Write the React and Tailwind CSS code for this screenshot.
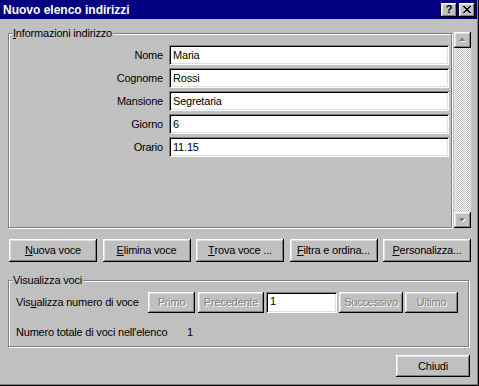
import React from 'react'

const raised =
  'shadow-[inset_-1px_-1px_0_#000,inset_1px_1px_0_#fff,inset_-2px_-2px_0_#808080,inset_2px_2px_0_#dfdfdf]'
const sunken =
  'shadow-[inset_1px_1px_0_#808080,inset_-1px_-1px_0_#fff,inset_2px_2px_0_#000,inset_-2px_-2px_0_#dfdfdf]'

const fields = [
  ['Nome', 'Maria'],
  ['Cognome', 'Rossi'],
  ['Mansione', 'Segretaria'],
  ['Giorno', '6'],
  ['Orario', '11.15'],
]

function Button({ className = '', disabled = false, children }) {
  return (
    <button
      type="button"
      className={`flex items-center justify-center bg-[#c0c0c0] ${raised} ${
        disabled ? 'text-[#808080] [text-shadow:1px_1px_0_#fff]' : 'text-black'
      } ${className}`}
    >
      {children}
    </button>
  )
}

function Arrow({ down = false }) {
  return (
    <svg width="9" height="6" viewBox="0 0 9 6" shapeRendering="crispEdges">
      {down ? (
        <>
          <polygon points="1,2 8,2 4.5,5.5" fill="#fff" />
          <polygon points="0,1 7,1 3.5,4.5" fill="#808080" />
        </>
      ) : (
        <>
          <polygon points="1,5 8,5 4.5,1.5" fill="#fff" />
          <polygon points="0,4 7,4 3.5,0.5" fill="#808080" />
        </>
      )}
    </svg>
  )
}

function Group({ label, className = '', children }) {
  return (
    <div
      className={`relative border border-[#808080] shadow-[inset_1px_1px_0_#fff,1px_1px_0_#fff] ${className}`}
    >
      <span className="absolute -top-[8px] left-[3px] bg-[#c0c0c0] px-[1px] leading-[14px]">
        {label}
      </span>
      {children}
    </div>
  )
}

export default function App() {
  return (
    <div className="flex h-[386px] w-[479px] flex-col bg-[#c0c0c0] font-['Liberation_Sans',Arial,sans-serif] text-[11px] tracking-[-0.2px] text-black shadow-[inset_-1px_-1px_0_#000,inset_-2px_-2px_0_#808080]">
      {/* title bar */}
      <div className="mr-[2px] flex h-[19px] shrink-0 items-center bg-[#000080] pl-[3px] pr-[2px]">
        <span className="text-[12px] font-bold tracking-normal text-white">Nuovo elenco indirizzi</span>
        <div className="ml-auto flex gap-[2px]">
          <Button className="h-[14px] w-[16px] text-[11px] font-bold leading-none">?</Button>
          <Button className="h-[14px] w-[16px]">
            <svg width="8" height="7" viewBox="0 0 8 7" shapeRendering="crispEdges">
              <path d="M0 0h2l2 2.5L6 0h2L5 3.5 8 7H6L4 4.5 2 7H0l3-3.5z" fill="#000" />
            </svg>
          </Button>
        </div>
      </div>

      {/* address info */}
      <div className="mt-[13px] flex pl-[8px]">
        <Group label={<><span className="underline">I</span>nformazioni indirizzo</>} className="mt-[1px] h-[195px] w-[444px]">
          <div className="flex flex-col gap-[3px] pt-[11px]">
            {fields.map(([label, value]) => (
              <div key={label} className="flex h-[20px] items-center">
                <span className="w-[154px] text-right">{label}</span>
                <input
                  readOnly
                  value={value}
                  className={`ml-[6px] h-[20px] w-[280px] bg-white pl-[4px] text-[11px] outline-none ${sunken}`}
                />
              </div>
            ))}
          </div>
        </Group>
        <div className="ml-[2px] flex h-[196px] w-[17px] flex-col">
          <Button className="h-[16px] w-[17px]">
            <Arrow />
          </Button>
          <div className="flex-1 bg-[image:repeating-conic-gradient(#fff_0_25%,#c0c0c0_0_50%)] bg-[length:2px_2px]" />
          <Button className="h-[16px] w-[17px]">
            <Arrow down />
          </Button>
        </div>
      </div>

      {/* action buttons */}
      <div className="ml-[9px] mt-[11px] flex w-[462px] justify-between">
        <Button className="h-[23px] w-[88px]">
          <span className="underline">N</span>uova voce
        </Button>
        <Button className="h-[23px] w-[88px]">
          <span className="underline">E</span>limina voce
        </Button>
        <Button className="h-[23px] w-[88px]">
          <span className="underline">T</span>rova voce ...
        </Button>
        <Button className="h-[23px] w-[88px]">
          <span className="underline">F</span>iltra e ordina...
        </Button>
        <Button className="h-[23px] w-[88px]">
          <span className="underline">P</span>ersonalizza...
        </Button>
      </div>

      {/* view entries */}
      <div className="mt-[18px] pl-[8px]">
        <Group label="Visualizza voci" className="h-[67px] w-[461px]">
          <div className="flex items-center pl-[7px] pt-[11px]">
            <span className="w-[132px]">
              Vis<span className="underline">u</span>alizza numero di voce
            </span>
            <Button disabled className="h-[21px] w-[47px]">Primo</Button>
            <Button disabled className="ml-[3px] h-[21px] w-[66px]">Precedente</Button>
            <input
              readOnly
              value="1"
              className={`ml-[2px] h-[21px] w-[71px] bg-white pl-[4px] pb-[4px] text-[11px] outline-none ${sunken}`}
            />
            <Button disabled className="ml-[2px] h-[21px] w-[64px]">Successivo</Button>
            <Button disabled className="ml-[2px] h-[21px] w-[53px]">Ultimo</Button>
          </div>
          <div className="mt-[12px] flex h-[14px] items-center pl-[7px]">
            <span className="w-[171px]">Numero totale di voci nell'elenco</span>
            <span>1</span>
          </div>
        </Group>
      </div>

      {/* footer */}
      <div className="mt-[8px] flex justify-end pr-[9px]">
        <Button className="h-[22px] w-[74px]">Chiudi</Button>
      </div>
    </div>
  )
}
